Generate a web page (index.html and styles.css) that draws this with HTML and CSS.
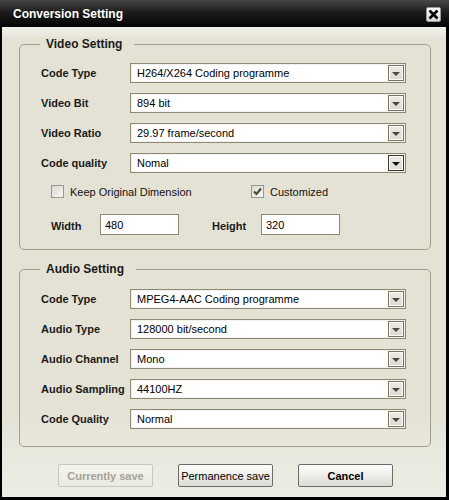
FILE: index.html
```html
<!DOCTYPE html>
<html lang="en">
    <head>
        <meta charset="UTF-8" />
        <title>Conversion Setting</title>
        <link rel="stylesheet" href="styles.css">
    </head>
    <body>
        <div class="window">
            <!-- title bar -->
            <div class="titlebar">
                <span class="title">Conversion Setting</span>
                <span class="close">
                    <svg width="11" height="11" viewBox="0 0 11 11">
                        <path d="M1.5 1.5 L9.5 9.5 M9.5 1.5 L1.5 9.5" stroke="#000" stroke-width="2.6" />
                    </svg>
                </span>
            </div>

            <div class="content">
                <!-- video -->
                <fieldset class="group video">
                    <legend>Video Setting</legend>
                    <div class="row">
                        <label>Code Type</label>
                        <div class="select"><span>H264/X264 Coding programme</span><i class="drop"></i></div>
                    </div>
                    <div class="row">
                        <label>Video Bit</label>
                        <div class="select"><span>894 bit</span><i class="drop"></i></div>
                    </div>
                    <div class="row">
                        <label>Video Ratio</label>
                        <div class="select"><span>29.97 frame/second</span><i class="drop"></i></div>
                    </div>
                    <div class="row">
                        <label>Code quality</label>
                        <div class="select"><span>Nomal</span><i class="drop dark"></i></div>
                    </div>

                    <div class="checks">
                        <span class="check first"><span class="box"></span>Keep Original Dimension</span>
                        <span class="check">
                            <span class="box">
                                <svg width="11" height="11" viewBox="0 0 11 11">
                                    <path d="M2 5.5 L4.5 8 L9 2.5" fill="none" stroke="#4a4434" stroke-width="2" />
                                </svg>
                            </span>Customized
                        </span>
                    </div>

                    <div class="size">
                        <label>Width</label>
                        <span class="input">480</span>
                        <label class="second">Height</label>
                        <span class="input">320</span>
                    </div>
                </fieldset>

                <!-- audio -->
                <fieldset class="group audio">
                    <legend>Audio Setting</legend>
                    <div class="row">
                        <label>Code Type</label>
                        <div class="select"><span>MPEG4-AAC Coding programme</span><i class="drop"></i></div>
                    </div>
                    <div class="row">
                        <label>Audio Type</label>
                        <div class="select"><span>128000 bit/second</span><i class="drop"></i></div>
                    </div>
                    <div class="row">
                        <label>Audio Channel</label>
                        <div class="select"><span>Mono</span><i class="drop"></i></div>
                    </div>
                    <div class="row">
                        <label>Audio Sampling</label>
                        <div class="select"><span>44100HZ</span><i class="drop"></i></div>
                    </div>
                    <div class="row">
                        <label>Code Quality</label>
                        <div class="select"><span>Normal</span><i class="drop"></i></div>
                    </div>
                </fieldset>

                <div class="buttons">
                    <button class="btn" disabled>Currently save</button>
                    <button class="btn plain">Permanence save</button>
                    <button class="btn">Cancel</button>
                </div>
            </div>
        </div>
    </body>
</html>
```

FILE: styles.css
```css
html,
body {
    margin: 0;
    padding: 0;
}
body {
    font-family: "Liberation Sans", Arial, sans-serif;
    font-size: 11px;
    color: #000;
    background: #000;
}

/* window frame */
.window {
    width: 449px;
    height: 500px;
    box-sizing: border-box;
    display: flex;
    flex-direction: column;
    background: #000;
    padding: 0 3px 3px 2px;
}

.titlebar {
    height: 27px;
    flex: none;
    margin: 0 -3px 0 -2px;
    display: flex;
    align-items: center;
    justify-content: space-between;
    padding: 0 8px 0 13px;
    background: linear-gradient(#474747, #1c1c1c 45%, #050505);
}
.title {
    color: #fff;
    font-size: 12px;
    font-weight: bold;
    margin-top: 1px;
}
.close {
    width: 15px;
    height: 15px;
    box-sizing: border-box;
    display: flex;
    align-items: center;
    justify-content: center;
    background: linear-gradient(#ffffff, #d9d9d9);
    border: 1px solid #9a9a9a;
    border-radius: 2px;
    margin-top: 1px;
}

/* client area */
.content {
    flex: 1;
    display: flex;
    flex-direction: column;
    background: linear-gradient(#f1f0e8 0, #e9e7dc 9px, #e4e2d5 11px, #e4e2d5 380px, #eeede5 100%);
}

/* group boxes */
.group {
    margin: 0 15px 0 17px;
    padding: 12px 24px 14px 21px;
    border: 1px solid #a29e8b;
    border-radius: 5px;
}
.video {
    margin-top: 10px;
}
.audio {
    margin-top: 12px;
    padding-top: 13px;
    padding-bottom: 17px;
}
.group legend {
    font-size: 12px;
    line-height: 14px;
    font-weight: bold;
    color: #1a1a1a;
    padding: 0 12px 0 6px;
    margin-left: -1px;
}

.row {
    display: flex;
    align-items: center;
    height: 20px;
    margin-bottom: 10px;
}
.audio .row:last-child {
    margin-bottom: 0;
}
.row label {
    width: 89px;
    flex: none;
    font-weight: bold;
    color: #1a1a1a;
}

/* fake combo box */
.select {
    flex: 1;
    height: 20px;
    box-sizing: border-box;
    display: flex;
    align-items: center;
    padding: 1px;
    background: #fff;
    border: 1px solid #8d8973;
    box-shadow: inset 0 0 0 1px #f3f2ec;
}
.select span {
    flex: 1;
    padding-left: 5px;
}
.drop {
    width: 16px;
    height: 16px;
    box-sizing: border-box;
    display: flex;
    align-items: center;
    justify-content: center;
    border: 1px solid #7a745c;
    box-shadow: inset 0 0 0 1px #fbfbf8;
    background: linear-gradient(#ecebe6, #dcdad2);
}
.drop::after {
    content: "";
    border-top: 4px solid #4f4735;
    border-left: 4px solid transparent;
    border-right: 4px solid transparent;
    margin-top: 1px;
}
.drop.dark {
    border-color: #3c3a30;
}
.drop.dark::after {
    border-top-color: #111;
}

/* check boxes */
.checks {
    display: flex;
    align-items: center;
    margin: 12px 0 0 10px;
    height: 13px;
}
.check {
    display: flex;
    align-items: center;
    gap: 6px;
    color: #111;
}
.check.first {
    width: 200px;
}
.box {
    width: 13px;
    height: 13px;
    box-sizing: border-box;
    display: flex;
    align-items: center;
    justify-content: center;
    border: 1px solid #9b988a;
    background: linear-gradient(135deg, #d9d8d1, #f7f7f4);
}

/* width / height */
.size {
    display: flex;
    align-items: center;
    margin: 16px 0 0 10px;
    height: 21px;
}
.size label {
    width: 49px;
    font-weight: bold;
    color: #1a1a1a;
    margin-top: 3px;
}
.size label.second {
    margin-left: 33px;
}
.input {
    width: 79px;
    height: 21px;
    box-sizing: border-box;
    display: flex;
    align-items: center;
    padding-left: 4px;
    background: #fff;
    border: 1px solid #8d8973;
}

/* bottom buttons */
.buttons {
    display: flex;
    gap: 25px;
    margin-top: 17px;
    padding-left: 56px;
}
.btn {
    width: 95px;
    height: 23px;
    padding: 0;
    font-family: inherit;
    font-size: 11px;
    font-weight: bold;
    color: #000;
    border: 1px solid #6d6b62;
    border-radius: 2px;
    background: linear-gradient(#fdfdfd, #efefec 45%, #dcdbd6);
}
.btn.plain {
    font-weight: normal;
}
.btn:disabled {
    color: #a5a396;
    border-color: #c9c7ba;
    background: linear-gradient(#f4f3ed, #ebeae2);
}
```
